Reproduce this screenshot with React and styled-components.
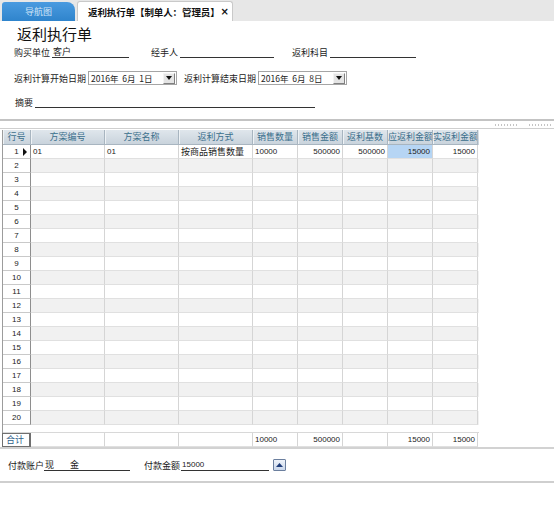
import React from "react";
import styled, { createGlobalStyle } from "styled-components";

const Global = createGlobalStyle`
  html, body { margin: 0; padding: 0; background: #fff; }
  body { font-family: "Liberation Sans", "Noto Sans CJK SC", sans-serif; color: #222; }
  * { box-sizing: border-box; }
`;

const CJK = `"Noto Sans CJK SC", "Liberation Sans", sans-serif`;
const NUM = `"Liberation Sans", "Noto Sans CJK SC", sans-serif`;

const Page = styled.div`
  width: 554px;
  height: 512px;
  background: #fff;
  overflow: hidden;
`;

const TabBar = styled.div`
  height: 21px;
  background: #e7e7e7;
  display: flex;
  align-items: flex-end;
  padding-left: 2px;
  gap: 2px;
`;

const NavTab = styled.div`
  width: 73px;
  height: 19px;
  border-radius: 3px 8px 0 0;
  background: linear-gradient(#4a9be0, #2f84cc);
  color: #cfe4f7;
  font-family: ${CJK};
  font-size: 9px;
  display: flex;
  align-items: center;
  justify-content: center;
`;

const ActiveTab = styled.div`
  height: 20px;
  background: #fff;
  border: 1px solid #c9c9c9;
  border-bottom: none;
  border-radius: 3px 3px 0 0;
  padding: 0 3px 0 10px;
  font-family: ${CJK};
  font-size: 9.5px;
  font-weight: bold;
  color: #111;
  display: flex;
  align-items: center;
  letter-spacing: -0.1px;
`;

const Close = styled.span`
  font-family: "DejaVu Sans", sans-serif;
  font-size: 10px;
  font-weight: bold;
  margin-left: 1px;
`;

const Form = styled.div`
  height: 98px;
  padding: 4px 0 0 14px;
  display: flex;
  flex-direction: column;
`;

const Title = styled.div`
  font-family: ${CJK};
  font-size: 15px;
  line-height: 18px;
  height: 18px;
  margin-left: 3px;
  color: #111;
`;

const FieldRow = styled.div`
  display: flex;
  align-items: ${(p) => (p.$center ? "center" : "flex-end")};
  height: ${(p) => p.$h || 12}px;
  margin-top: ${(p) => p.$mt || 0}px;
`;

const Field = styled.div`
  display: flex;
  align-items: ${(p) => (p.$center ? "center" : "flex-end")};
  margin-left: ${(p) => p.$ml || 0}px;
`;

const Label = styled.span`
  font-family: ${CJK};
  font-size: 9px;
  line-height: 11px;
  color: #222;
  white-space: nowrap;
  margin-left: ${(p) => p.$ml || 0}px;
`;

const Line = styled.span`
  display: inline-block;
  width: ${(p) => p.$w}px;
  height: 12px;
  border-bottom: 1px solid #333;
  margin-left: ${(p) => (p.$gap !== undefined ? p.$gap : 2)}px;
  font-family: ${(p) => (p.$num ? NUM : CJK)};
  font-size: ${(p) => (p.$num ? 8 : 9)}px;
  line-height: 11px;
  padding-left: 1px;
  white-space: pre;
  color: #222;
`;

const Spaced = styled.span`
  margin-left: ${(p) => p.$ml}px;
`;

const Select = styled.div`
  display: flex;
  align-items: center;
  width: ${(p) => p.$w}px;
  height: 14px;
  border: 1px solid #a5a5a5;
  margin-left: 2px;
  background: #fff;
  padding-left: 2px;
  font-family: ${CJK};
  font-size: 8.5px;
  color: #222;
`;

const SelText = styled.span`
  flex: 1;
  white-space: pre;
`;

const SelBtn = styled.span`
  width: 12px;
  height: 11px;
  margin-right: 1px;
  border: 1px solid;
  border-color: #f4f4f4 #808080 #808080 #f4f4f4;
  background: #e4e4e4;
  display: flex;
  align-items: center;
  justify-content: center;
`;

const Splitter = styled.div`
  height: 10px;
  border-top: 2px solid #c3c3c3;
  border-bottom: 1px solid #cfcfcf;
  display: flex;
  justify-content: flex-end;
  align-items: center;
  gap: 10px;
  padding-right: 1px;
`;

const Grip = styled.span`
  width: 24px;
  height: 2px;
  background-image: repeating-linear-gradient(90deg, #c4c4c4 0 1px, transparent 1px 3px);
`;

const GridWrap = styled.div`
  margin: 1px 0 0 2px;
  height: 317px;
  display: flex;
  flex-direction: column;
  border-left: 1px solid #9c9c9c;
  width: 477px;
`;

const COLS = "28px 74px 74px 74px 45px 45px 45px 45px 45px";

const Row = styled.div`
  display: grid;
  grid-template-columns: ${COLS};
  height: 14px;
  background: ${(p) => (p.$alt ? "#f1f1f1" : "#fff")};
`;

const HeadRow = styled(Row)`
  background: linear-gradient(#dfe6ec, #c8d2db);
  height: 15px;
`;

const HeadCell = styled.div`
  border-right: 1px solid #a8b5c0;
  border-bottom: 1px solid #a8b5c0;
  box-shadow: inset 1px 0 0 #eef2f5;
  font-family: ${CJK};
  font-size: 9px;
  line-height: 14px;
  color: #3b6f8c;
  text-align: center;
  white-space: nowrap;
  overflow: hidden;
`;

const RowHead = styled.div`
  background: #fff;
  border-right: 1px solid #8e8e8e;
  border-bottom: 1px solid #c9c9c9;
  font-family: ${NUM};
  font-size: 8px;
  line-height: 13px;
  color: #222;
  display: flex;
  align-items: center;
  justify-content: center;
  gap: 4px;
  padding-left: ${(p) => (p.$cur ? 8 : 0)}px;
`;

const Arrow = styled.span`
  width: 0;
  height: 0;
  border-top: 4px solid transparent;
  border-bottom: 4px solid transparent;
  border-left: 4px solid #111;
`;

const Cell = styled.div`
  border-right: 1px solid #d5d5d5;
  border-bottom: 1px solid #e0e0e0;
  font-family: ${(p) => (p.$cjk ? CJK : NUM)};
  font-size: ${(p) => (p.$cjk ? 9 : 8)}px;
  line-height: 13px;
  text-align: ${(p) => (p.$right ? "right" : "left")};
  padding: 0 2px;
  color: #222;
  background: ${(p) => (p.$sel ? "#b6d5f4" : "transparent")};
  white-space: nowrap;
  overflow: hidden;
`;

const Gap = styled.div`
  flex: 1;
`;

const TotalHead = styled.div`
  border: 1px solid #6f6f6f;
  border-right-width: 2px;
  margin-left: -1px;
  background: #fff;
  font-family: ${CJK};
  font-size: 9px;
  line-height: 11px;
  color: #2f5f8a;
  padding-left: 3px;
`;

const TotalRow = styled(Row)`
  height: 15px;
  border-top: 1px solid #d8d8d8;
`;

const Footer = styled.div`
  height: 36px;
  border-top: 2px solid #d2d2d2;
  border-bottom: 2px solid #cfcfcf;
  display: flex;
  align-items: center;
  padding-left: 8px;
`;

const UpBtn = styled.div`
  width: 13px;
  height: 12px;
  margin-left: 4px;
  border: 1px solid #6b7f9e;
  border-radius: 1px;
  background: linear-gradient(#eef3fa, #c9d6ea);
  display: flex;
  align-items: center;
  justify-content: center;
`;

const cols = ["行号", "方案编号", "方案名称", "返利方式", "销售数量", "销售金额", "返利基数", "应返利金额", "实返利金额"];

const Caret = () => (
  <SelBtn>
    <svg width="6" height="4" viewBox="0 0 6 4"><path d="M0 0h6L3 4z" fill="#111" /></svg>
  </SelBtn>
);

export default function App() {
  const rows = Array.from({ length: 20 }, (_, i) => i + 1);
  return (
    <Page>
      <Global />
      <TabBar>
        <NavTab>导航图</NavTab>
        <ActiveTab>
          返利执行单【制单人：管理员】<Close>×</Close>
        </ActiveTab>
      </TabBar>
      <Form>
        <Title>返利执行单</Title>
        <FieldRow $mt={3}>
          <Field>
            <Label>购买单位</Label>
            <Line $w={77}>客户</Line>
          </Field>
          <Field $ml={22}>
            <Label>经手人</Label>
            <Line $w={94}></Line>
          </Field>
          <Field $ml={18}>
            <Label>返利科目</Label>
            <Line $w={86}></Line>
          </Field>
        </FieldRow>
        <FieldRow $mt={13} $h={14} $center>
          <Label>返利计算开始日期</Label>
          <Select $w={89}>
            <SelText>2016年  6月  1日</SelText>
            <Caret />
          </Select>
          <Field $ml={7} $center>
            <Label>返利计算结束日期</Label>
            <Select $w={89}>
              <SelText>2016年  6月  8日</SelText>
              <Caret />
            </Select>
          </Field>
        </FieldRow>
        <FieldRow $mt={11}>
          <Label $ml={1}>摘要</Label>
          <Line $w={280}></Line>
        </FieldRow>
      </Form>
      <Splitter>
        <Grip />
        <Grip />
      </Splitter>
      <GridWrap>
        <HeadRow>
          {cols.map((c) => (
            <HeadCell key={c}>{c}</HeadCell>
          ))}
        </HeadRow>
        {rows.map((n) => (
          <Row key={n} $alt={n % 2 === 0}>
            <RowHead $cur={n === 1}>
              {n}
              {n === 1 && <Arrow />}
            </RowHead>
            {n === 1 ? (
              <>
                <Cell>01</Cell>
                <Cell>01</Cell>
                <Cell $cjk>按商品销售数量</Cell>
                <Cell>10000</Cell>
                <Cell $right>500000</Cell>
                <Cell $right>500000</Cell>
                <Cell $right $sel>15000</Cell>
                <Cell $right>15000</Cell>
              </>
            ) : (
              Array.from({ length: 8 }, (_, k) => <Cell key={k} />)
            )}
          </Row>
        ))}
        <Gap />
        <TotalRow>
          <TotalHead>合计</TotalHead>
          <Cell />
          <Cell />
          <Cell />
          <Cell>10000</Cell>
          <Cell $right>500000</Cell>
          <Cell />
          <Cell $right>15000</Cell>
          <Cell $right>15000</Cell>
        </TotalRow>
      </GridWrap>
      <Footer>
        <Label>付款账户</Label>
        <Line $w={86} $gap={0}>现<Spaced $ml={16}>金</Spaced></Line>
        <Field $ml={14}>
          <Label>付款金额</Label>
          <Line $w={88} $num $gap={1}>15000</Line>
        </Field>
        <UpBtn>
          <svg width="7" height="4" viewBox="0 0 7 4"><path d="M0 4L3.5 0 7 4z" fill="#1f3d7a" /></svg>
        </UpBtn>
      </Footer>
    </Page>
  );
}
